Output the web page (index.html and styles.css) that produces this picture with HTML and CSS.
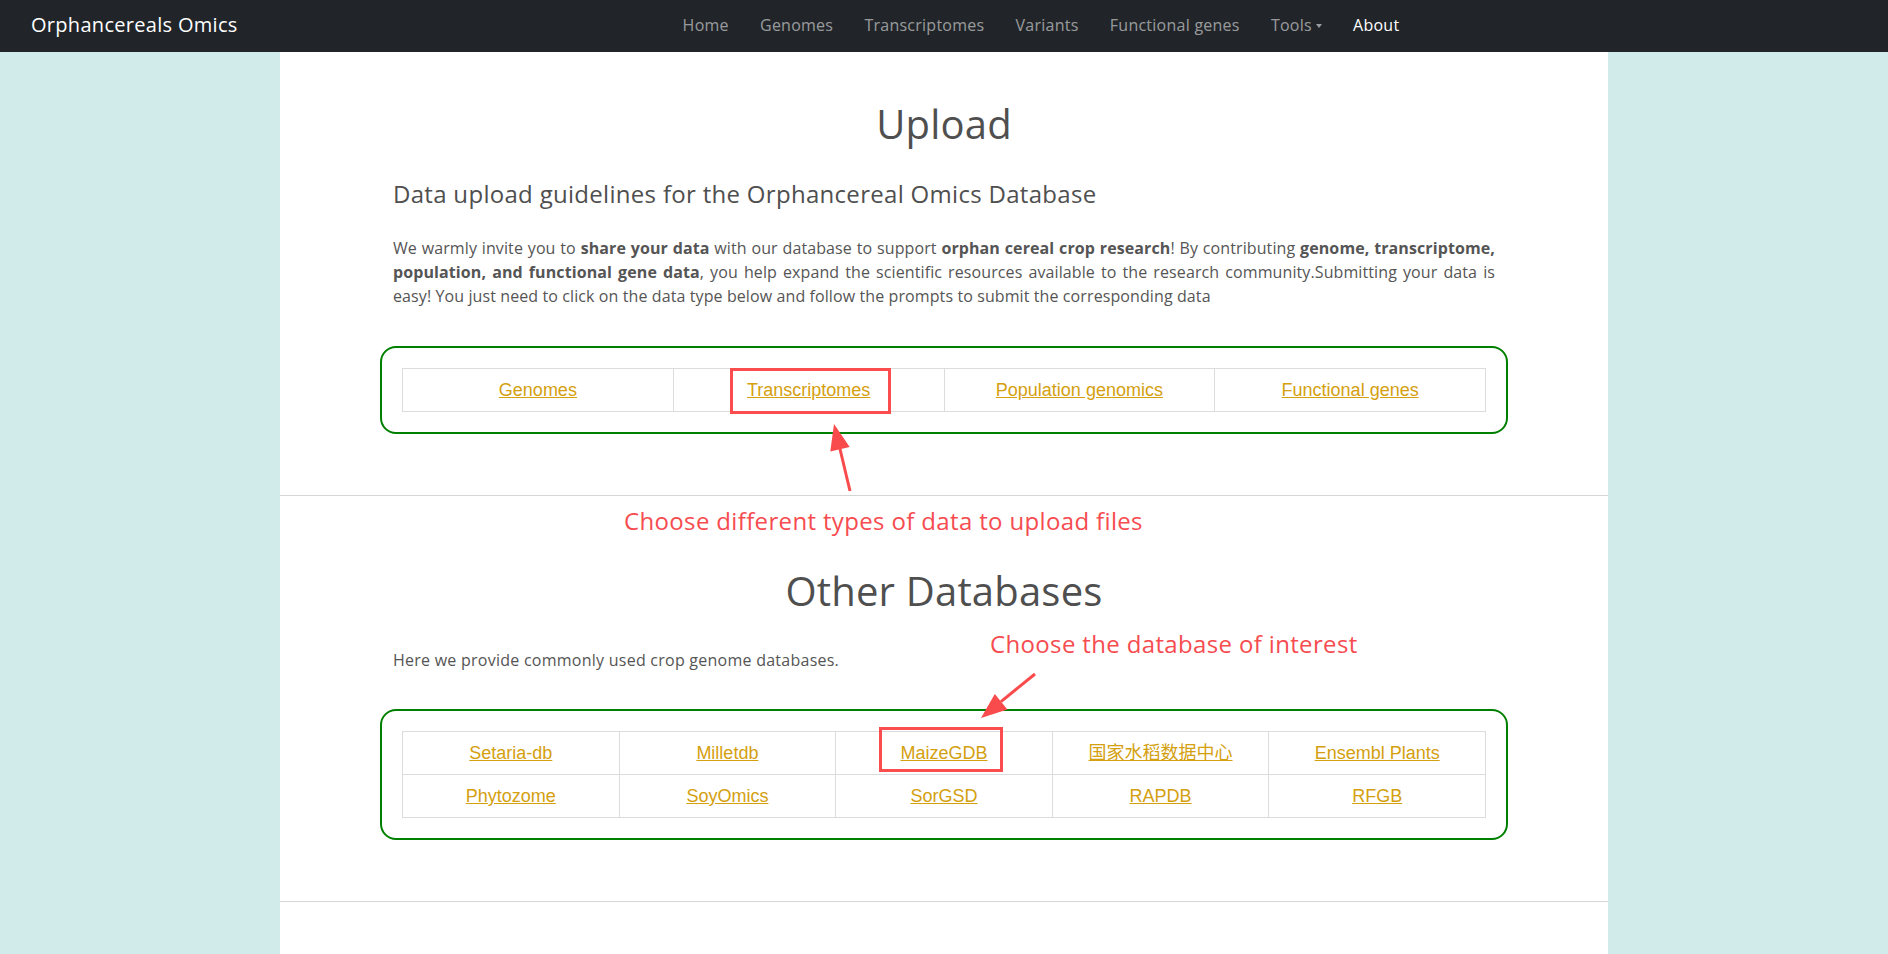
FILE: index.html
```html
<!DOCTYPE html>
<html lang="en">
<head>
<meta charset="utf-8">
<title>Upload - Orphancereals Omics</title>
<link rel="stylesheet" href="styles.css">
</head>
<body>
<header class="navbar">
  <a class="brand" href="#">Orphancereals Omics</a>
  <ul class="nav">
    <li><a href="#">Home</a></li>
    <li><a href="#">Genomes</a></li>
    <li><a href="#">Transcriptomes</a></li>
    <li><a href="#">Variants</a></li>
    <li><a href="#">Functional genes</a></li>
    <li><a href="#" class="dropdown">Tools</a></li>
    <li><a href="#" class="active">About</a></li>
  </ul>
</header>
<main class="page">
  <section class="section upload">
    <h1 class="title">Upload</h1>
    <h4 class="subtitle">Data upload guidelines for the Orphancereal Omics Database</h4>
    <p class="lead"><span>We warmly invite you to</span> <b>share your data</b> <span>with our database to support</span> <b>orphan cereal crop research</b><span>! By contributing</span> <b>genome, transcriptome,</b> <b>population, and functional gene data</b><span>, you help expand the scientific resources available to the research community.Submitting your data is</span> <span>easy! You just need to click on the data type below and follow the prompts to submit the corresponding data</span></p>
    <div class="green-box">
      <table class="links four">
        <tr>
          <td><a href="#">Genomes</a></td>
          <td><a href="#">Transcriptomes</a></td>
          <td><a href="#">Population genomics</a></td>
          <td><a href="#">Functional genes</a></td>
        </tr>
      </table>
    </div>
  </section>
  <hr class="divider">
  <section class="section others">
    <h1 class="title other-title">Other Databases</h1>
    <p class="lead intro">Here we provide commonly used crop genome databases.</p>
    <div class="green-box">
      <table class="links five">
        <tr>
          <td><a href="#">Setaria-db</a></td>
          <td><a href="#">Milletdb</a></td>
          <td><a href="#">MaizeGDB</a></td>
          <td><a href="#">国家水稻数据中心</a></td>
          <td><a href="#">Ensembl Plants</a></td>
        </tr>
        <tr>
          <td><a href="#">Phytozome</a></td>
          <td><a href="#">SoyOmics</a></td>
          <td><a href="#">SorGSD</a></td>
          <td><a href="#">RAPDB</a></td>
          <td><a href="#">RFGB</a></td>
        </tr>
      </table>
    </div>
  </section>
  <hr class="divider">

  <div class="mark mark-transcriptomes"></div>
  <div class="mark mark-maize"></div>
  <p class="note note-upload">Choose different types of data to upload files</p>
  <p class="note note-db">Choose the database of interest</p>
  <svg class="arrow arrow-up" width="45" height="75" viewBox="0 0 45 75">
    <line x1="30" y1="71" x2="20" y2="29" stroke="#f94b4b" stroke-width="3"/>
    <polygon points="14,4 29.7,27 10.3,31.6" fill="#f94b4b"/>
  </svg>
  <svg class="arrow arrow-down" width="75" height="57" viewBox="0 0 75 57">
    <line x1="65" y1="6" x2="31" y2="33.6" stroke="#f94b4b" stroke-width="3"/>
    <polygon points="11,50 37.4,41.4 24.8,25.9" fill="#f94b4b"/>
  </svg>
</main>
</body>
</html>
```

FILE: styles.css
```css
html, body {
  margin: 0;
  padding: 0;
}

body {
  background: #d1eaea;
  font-family: "Open Sans", "Noto Sans", sans-serif;
  color: #555;
}

/* ---------- navbar ---------- */
.navbar {
  box-sizing: border-box;
  height: 52px;
  background: #212529;
  display: flex;
  align-items: center;
  padding: 0 0 3px 31px;
}

.brand {
  width: 220px;
  color: #fff;
  text-decoration: none;
  font-size: 20px;
  letter-spacing: 0.3px;
  line-height: 28px;
}

.nav {
  list-style: none;
  margin: 0 0 0 416px;
  padding: 0;
  display: flex;
}

.nav a {
  display: block;
  padding: 0 15.6px;
  color: rgba(255, 255, 255, 0.55);
  text-decoration: none;
  font-size: 16px;
  letter-spacing: 0.25px;
  line-height: 24px;
}

.nav a.active {
  color: #fff;
}

.nav a.dropdown::after {
  content: "";
  display: inline-block;
  margin-left: 4px;
  vertical-align: 3px;
  border-top: 4px solid;
  border-left: 3.5px solid transparent;
  border-right: 3.5px solid transparent;
}

/* ---------- page ---------- */
.page {
  position: relative;
  width: 1328px;
  margin: 0 auto;
  min-height: calc(100vh - 52px);
  background: #fff;
}

.section {
  padding: 0 113px;
}

.upload {
  padding-top: 48px;
}

.title {
  margin: 0;
  text-align: center;
  font-size: 40px;
  font-weight: 400;
  letter-spacing: 0.2px;
  line-height: 48px;
  color: #4f4f4f;
}

.subtitle {
  margin: 32px 0 0;
  font-size: 24px;
  font-weight: 400;
  letter-spacing: 0.3px;
  line-height: 28px;
  color: #4f4f4f;
}

.lead {
  margin: 28px 0 0;
  font-size: 16px;
  letter-spacing: 0.1px;
  line-height: 24px;
  text-align: justify;
}

.intro {
  letter-spacing: 0.25px;
}

.lead b {
  font-weight: 700;
}

.green-box {
  width: 1084px;
  margin: 38px -13px 0;
  padding: 20px;
  border: 2px solid #008000;
  border-radius: 16px;
}

.divider {
  margin: 61px 0 0;
  border: 0;
  border-top: 1px solid #d6d6d6;
  height: 0;
}

.other-title {
  margin-top: 71px;
}

.intro {
  margin-top: 33px;
}

.others .green-box {
  margin-top: 37px;
}

/* ---------- link tables ---------- */
.links {
  width: 100%;
  border-collapse: collapse;
  table-layout: fixed;
}

.links td {
  border: 1px solid #dcdcdc;
  padding: 8px 4px;
  text-align: center;
  font-family: "Liberation Sans", "Noto Sans CJK SC", sans-serif;
  font-size: 18px;
  line-height: 26px;
}

.links a {
  color: #d4a00f;
  text-decoration: underline;
}

/* ---------- annotations ---------- */
.mark {
  position: absolute;
  border: 3px solid #fb4d4d;
  box-sizing: border-box;
}

.mark-transcriptomes {
  left: 450px;
  top: 316px;
  width: 161px;
  height: 46px;
}

.mark-maize {
  left: 599px;
  top: 675px;
  width: 124px;
  height: 45px;
}

.note {
  position: absolute;
  margin: 0;
  color: #f64c50;
  font-size: 24px;
  letter-spacing: 0.35px;
  line-height: 30px;
  white-space: nowrap;
}

.note-upload {
  left: 344px;
  top: 454px;
}

.note-db {
  left: 710px;
  top: 577px;
}

.arrow {
  position: absolute;
  display: block;
}

.arrow-up {
  left: 540px;
  top: 368px;
}

.arrow-down {
  left: 690px;
  top: 616px;
}
```
